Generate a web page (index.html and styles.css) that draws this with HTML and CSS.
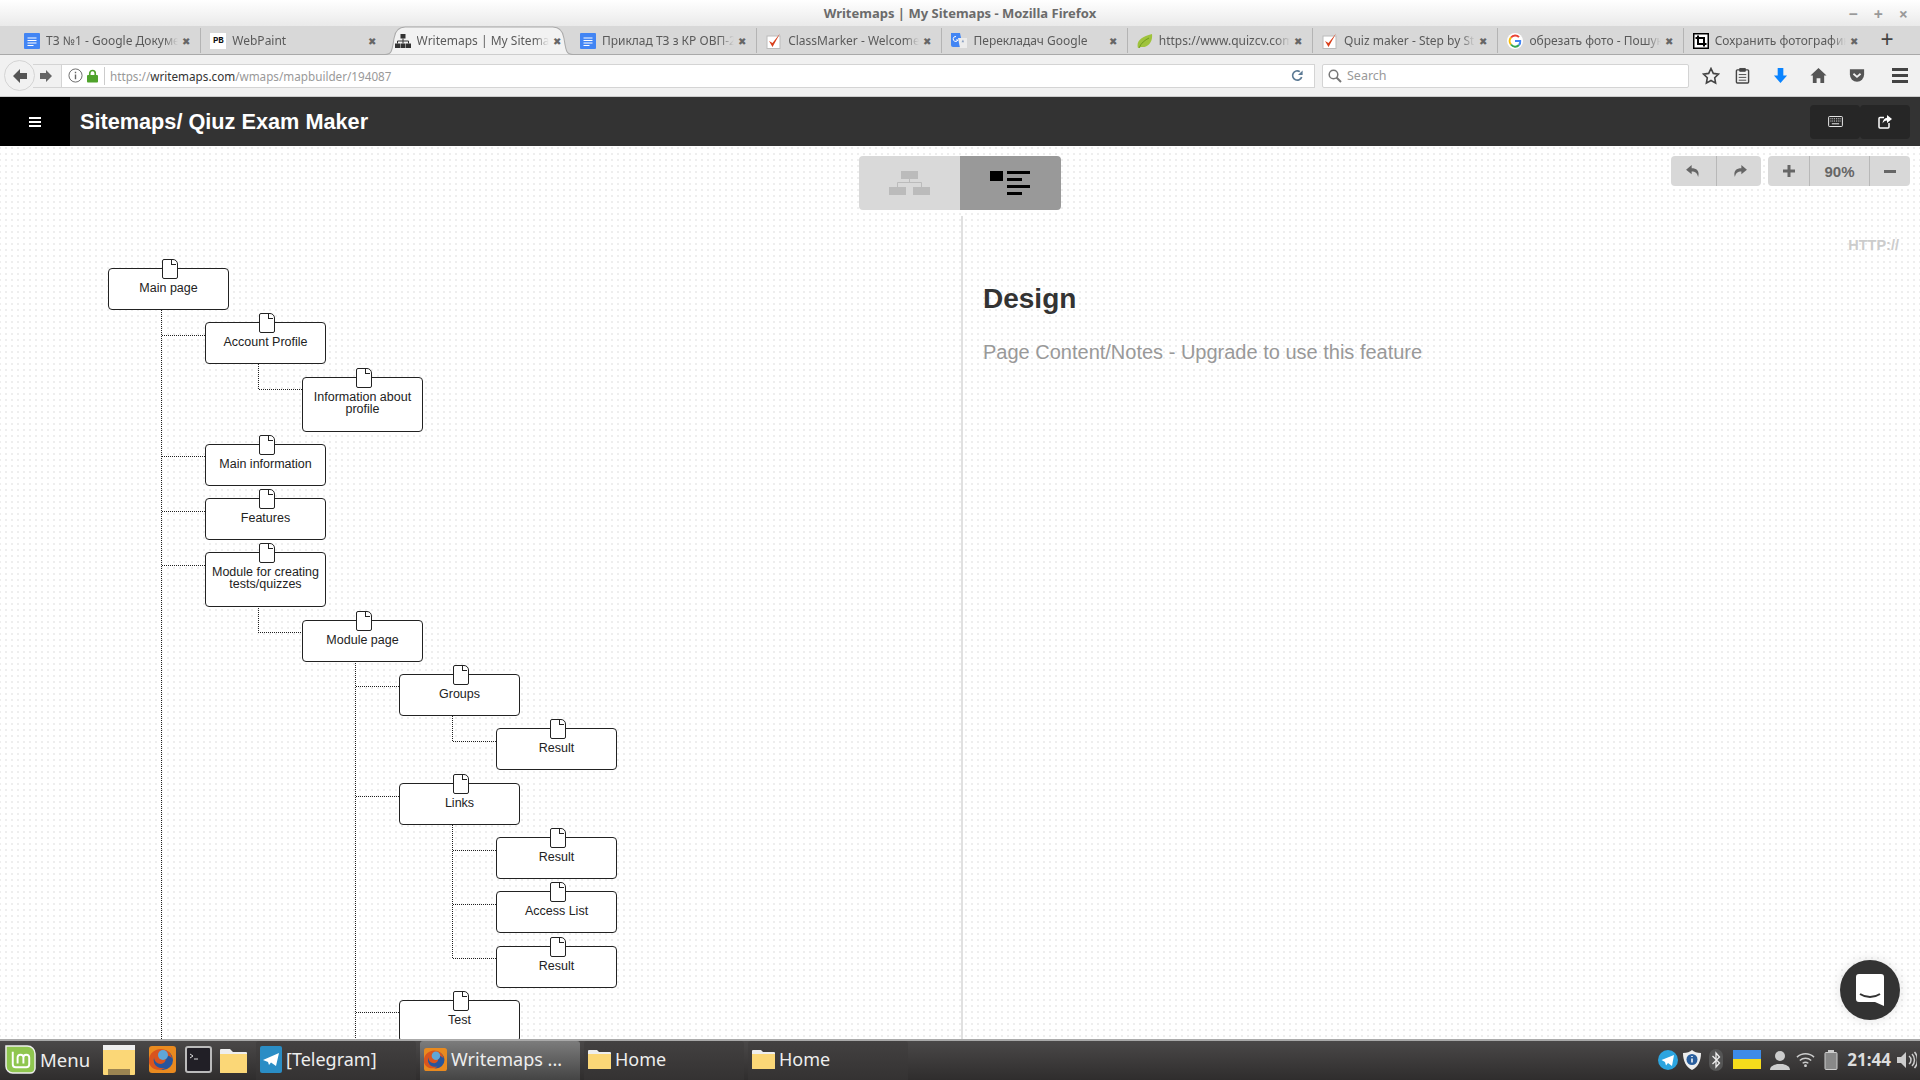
FILE: index.html
```html
<!doctype html>
<html>
<head>
<meta charset="UTF-8">
<title>Writemaps | My Sitemaps</title>
<link rel="stylesheet" href="styles.css">
</head>

<body>
<div class="window-bar">
	<span class="window-title">Writemaps | My Sitemaps - Mozilla Firefox</span>
	<div class="window-controls"><span>&#8722;</span><span>+</span><span>&#215;</span></div>
</div>

<div class="tab-bar">
	<div class="tab">
		<svg class="fav" viewBox="0 0 16 16"><rect width="16" height="16" rx="1" fill="#4285f4"/><path d="M3.5 5h9M3.5 7.5h9M3.5 10h9M3.5 12.5h6" stroke="#fff" stroke-width="1"/></svg>
		<span class="tab-text">ТЗ №1 - Google Документи</span><span class="tab-x">&#10006;</span>
	</div>
	<div class="tab">
		<span class="fav fav-pb">PB</span>
		<span class="tab-text">WebPaint</span><span class="tab-x">&#10006;</span>
	</div>
	<div class="tab tab-active">
		<svg class="tab-shape" viewBox="0 0 186 29" preserveAspectRatio="none"><path d="M0 28.5C7 28.5 7 24 9 12 10 5 13 1 20 1H166C173 1 176 5 177 12 179 24 179 28.5 186 28.5" fill="#f2f2f2" stroke="#a9a9a9"/></svg>
		<svg class="fav" viewBox="0 0 16 16"><path d="M5.5 1h5v4.500h-5zM0 10.500h5V15H0zM5.500 10.500h5V15h-5zM11 10.500h5V15h-5z" fill="#333"/><path d="M8 5.500V10.500M2.500 10.500V8h11v2.500" stroke="#333" fill="none"/></svg>
		<span class="tab-text">Writemaps | My Sitemaps</span><span class="tab-x">&#10006;</span>
	</div>
	<div class="tab">
		<svg class="fav" viewBox="0 0 16 16"><rect width="16" height="16" rx="1" fill="#4285f4"/><path d="M3.5 5h9M3.5 7.5h9M3.5 10h9M3.5 12.5h6" stroke="#fff" stroke-width="1"/></svg>
		<span class="tab-text">Приклад ТЗ з КР ОВП-2</span><span class="tab-x">&#10006;</span>
	</div>
	<div class="tab">
		<svg class="fav" viewBox="0 0 16 16"><rect x="1" y="3" width="13" height="12.500" fill="#fff" stroke="#bbb"/><path d="M3 8l3.500 6L14 0.500 6.500 10z" fill="#d9401c"/></svg>
		<span class="tab-text">ClassMarker - Welcome</span><span class="tab-x">&#10006;</span>
	</div>
	<div class="tab">
		<svg class="fav" viewBox="0 0 16 16"><path d="M0 0h9l3 14H2a2 2 0 0 1-2-2z" fill="#4285f4"/><path d="M7 5h9v10H9z" fill="#ececec"/><path d="M12 6.500l1 2.800h-2.500z" fill="#8a9fc0"/><path d="M5 3.500a2.500 2.500 0 1 0 2 3.500H5" fill="none" stroke="#fff"/></svg>
		<span class="tab-text">Перекладач Google</span><span class="tab-x">&#10006;</span>
	</div>
	<div class="tab">
		<svg class="fav" viewBox="0 0 16 16"><path d="M1 15C-1 8 4 4 15 1 16 9 11 15 4 14z" fill="#9fc33c"/><path d="M2 15C4 10 8 7 12 5" stroke="#6f9a20" fill="none"/></svg>
		<span class="tab-text">https://www.quizcv.com</span><span class="tab-x">&#10006;</span>
	</div>
	<div class="tab">
		<svg class="fav" viewBox="0 0 16 16"><rect x="1" y="3" width="13" height="12.500" fill="#fff" stroke="#bbb"/><path d="M3 8l3.500 6L14 0.500 6.500 10z" fill="#d9401c"/></svg>
		<span class="tab-text">Quiz maker - Step by Step</span><span class="tab-x">&#10006;</span>
	</div>
	<div class="tab">
		<svg class="fav" viewBox="0 0 16 16"><circle cx="8" cy="8" r="8" fill="#fff"/><path d="M12 4.200A5.200 5.200 0 0 0 4 4.500" fill="none" stroke="#ea4335" stroke-width="2"/><path d="M4 4.500A5.200 5.200 0 0 0 4 11.500" fill="none" stroke="#fbbc05" stroke-width="2"/><path d="M4 11.500A5.200 5.200 0 0 0 12 12" fill="none" stroke="#34a853" stroke-width="2"/><path d="M12 12A5.200 5.200 0 0 0 13.200 8H8" fill="none" stroke="#4285f4" stroke-width="2"/></svg>
		<span class="tab-text">обрезать фото - Пошук</span><span class="tab-x">&#10006;</span>
	</div>
	<div class="tab">
		<svg class="fav" viewBox="0 0 16 16"><rect width="16" height="16" fill="#000"/><rect x="1.500" y="1.500" width="13" height="13" fill="#fff"/><path d="M5 2.500V11H13.500M2.500 5H11V13.500" fill="none" stroke="#000" stroke-width="2"/></svg>
		<span class="tab-text">Сохранить фотографию</span><span class="tab-x">&#10006;</span>
	</div>
	<span class="tab-new">+</span>
</div>

<div class="nav-bar">
	<div class="nav-back"><svg viewBox="0 0 18 18" width="18" height="18"><path d="M9 2L2 9l7 7V12h7V6H9z" fill="#555"/></svg></div>
	<div class="nav-forward"><svg viewBox="0 0 14 14" width="14" height="14"><path d="M7 1l6 6-6 6V10H1V4h6z" fill="#666"/></svg></div>
	<div class="url-bar">
		<svg class="url-info" viewBox="0 0 16 16" width="15" height="15"><circle cx="8" cy="8" r="7" fill="none" stroke="#666"/><path d="M8 7v5M8 4v1.500" stroke="#666" stroke-width="1.500"/></svg>
		<svg class="url-lock" viewBox="0 0 12 14" width="11" height="14"><rect y="6" width="12" height="8" rx="1" fill="#4fa32b"/><path d="M3 6V4a3 3 0 0 1 6 0v2" fill="none" stroke="#4fa32b" stroke-width="1.800"/></svg>
		<span class="url-text">https://<b>writemaps.com</b>/wmaps/mapbuilder/194087</span>
		<svg class="url-reload" viewBox="0 0 14 14" width="13" height="13"><path d="M11.500 8.500A5 5 0 1 1 9.500 2.800" fill="none" stroke="#5c7a94" stroke-width="1.800"/><path d="M7.500 6.500L12.500 6.500 12.500 1.500z" fill="#5c7a94"/></svg>
	</div>
	<div class="search-bar">
		<svg viewBox="0 0 14 14" width="14" height="14"><circle cx="5.500" cy="5.500" r="4.300" fill="none" stroke="#777" stroke-width="1.500"/><path d="M8.500 8.500L13 13" stroke="#777" stroke-width="2"/></svg>
		<span>Search</span>
	</div>
	<div class="nav-icons">
		<svg class="nav-star" viewBox="0 0 18 18" width="18" height="18"><path d="M9 1.500l2.300 4.900 5.200.7-3.800 3.700.9 5.300L9 13.500l-4.600 2.600.9-5.300L1.500 7.100l5.200-.7z" fill="none" stroke="#444" stroke-width="1.600"/></svg>
		<svg class="nav-clip" viewBox="0 0 16 18" width="15" height="17"><rect x="1.500" y="3" width="13" height="14" rx="1" fill="none" stroke="#444" stroke-width="1.500"/><path d="M5 1.500h6v3H5zM4 8h8M4 11h8M4 14h8" stroke="#444" fill="#444"/></svg>
		<svg class="nav-down" viewBox="0 0 16 18" width="15" height="17"><path d="M5 1h6v8h4l-7 8-7-8h4z" fill="#0a84ff"/></svg>
		<svg class="nav-home" viewBox="0 0 18 18" width="17" height="17"><path d="M9 1L0.500 9H3v8h4v-5h4v5h4V9h2.500z" fill="#555"/></svg>
		<svg class="nav-pocket" viewBox="0 0 18 16" width="16" height="15"><path d="M1 1h16v6a8 8 0 0 1-16 0z" fill="#555"/><path d="M5 6l4 3.500L13 6" stroke="#f1f1f1" stroke-width="2" fill="none"/></svg>
		<div class="nav-menu"><i></i><i></i><i></i></div>
	</div>
</div>

<div class="app-header">
	<div class="app-burger"><i></i><i></i><i></i></div>
	<h1 class="app-title">Sitemaps/ Qiuz Exam Maker</h1>
	<div class="app-actions">
		<span class="app-action"><svg viewBox="0 0 16 12" width="15" height="11"><rect x=".5" y=".5" width="15" height="11" rx="1" fill="none" stroke="#fff"/><path d="M2.500 3h11M2.500 5.500h11" stroke="#fff" stroke-dasharray="1 1"/><path d="M4 8.500h8" stroke="#fff"/></svg></span>
		<span class="app-action"><svg viewBox="0 0 14 14" width="14" height="14"><path d="M6 2.500H2a1 1 0 0 0-1 1V12a1 1 0 0 0 1 1h8a1 1 0 0 0 1-1V8" fill="none" stroke="#fff" stroke-width="1.500"/><path d="M9 0l5 4-5 4V5.500C7 5.500 5.500 6.500 4.500 8.500 4.700 5 6.500 3 9 2.700z" fill="#fff"/></svg></span>
	</div>
</div>

<div class="canvas">
	<div class="tree">
		<svg class="links" width="640" height="894">
			<path d="M161.500 164V894M162 189.500H205M162 310.500H205M162 365.500H205M162 419.500H205"/>
			<path d="M258.500 218V243.500H302M258.500 460V486.500H302"/>
			<path d="M355.500 515V894M356 540.500H399M356 650.500H399M356 866.500H399"/>
			<path d="M452.500 570V595.500H496M452.500 677V812.500H496M453 704.500H496M453 758.500H496"/>
		</svg>

		<div class="node lvl0">Main page</div>
		<div class="node lvl1">Account Profile</div>
		<div class="node lvl2 node-tall">Information about<br>profile</div>
		<div class="node lvl1">Main information</div>
		<div class="node lvl1">Features</div>
		<div class="node lvl1 node-tall">Module for creating<br>tests/quizzes</div>
		<div class="node lvl2">Module page</div>
		<div class="node lvl3">Groups</div>
		<div class="node lvl4">Result</div>
		<div class="node lvl3">Links</div>
		<div class="node lvl4">Result</div>
		<div class="node lvl4">Access List</div>
		<div class="node lvl4">Result</div>
		<div class="node lvl3">Test</div>
	</div>

	<div class="detail">
		<div class="detail-http">HTTP://</div>
		<h2 class="detail-title">Design</h2>
		<p class="detail-note">Page Content/Notes - Upgrade to use this feature</p>
	</div>

	<div class="view-toggle">
		<span class="view-tree"><svg viewBox="0 0 41 24" width="41" height="24"><path d="M12 0h17v8H12zM0 16h17v8H0zM24 16h17v8H24z" fill="#bbb"/><path d="M20.500 8v3M8.500 16v-4.500h24V16" stroke="#bbb" fill="none"/></svg></span>
		<span class="view-list"><svg viewBox="0 0 40 24" width="40" height="24"><path d="M0 0h13v10H0zM17 0h23v3H17zM17 7h15v3H17zM17 14h23v3H17zM17 21h15v3H17z" fill="#000"/></svg></span>
	</div>

	<div class="tools">
		<div class="tool-group">
			<span class="tool tool-undo"><svg viewBox="0 0 16 14" width="15" height="13"><path d="M6 0L0 5l6 5V7c4 0 6 1.500 7 6 2-7-2-9.500-7-9.500z" fill="#666"/></svg></span>
			<span class="tool tool-undo"><svg viewBox="0 0 16 14" width="15" height="13"><path d="M10 0l6 5-6 5V7C6 7 4 8.500 3 13 1 6 5 3.500 10 3.500z" fill="#666"/></svg></span>
		</div>
		<div class="tool-group">
			<span class="tool tool-plus"><svg viewBox="0 0 12 12" width="12" height="12"><path d="M4.500 0h3v4.500H12v3H7.500V12h-3V7.500H0v-3h4.500z" fill="#666"/></svg></span>
			<span class="tool tool-zoom">90%</span>
			<span class="tool tool-minus"><svg viewBox="0 0 12 3" width="12" height="3"><path d="M0 0h12v3H0z" fill="#666"/></svg></span>
		</div>
	</div>

	<div class="chat-btn"><svg viewBox="0 0 28 32" width="28" height="32"><path d="M3 0h22a3 3 0 0 1 3 3v29l-9-4H3a3 3 0 0 1-3-3V3a3 3 0 0 1 3-3z" fill="#fff"/><path d="M4 20c6 4 14 4 20 0" fill="none" stroke="#333" stroke-width="2"/></svg></div>
</div>

<div class="taskbar">
	<div class="task-menu">
		<svg viewBox="0 0 32 32" width="31" height="31"><path d="M1 2h22a8 8 0 0 1 8 8v15a5 5 0 0 1-5 5H8a7 7 0 0 1-7-7z" fill="#8fc64f" stroke="#eee" stroke-width="1.500"/><path d="M8 8v13a3 3 0 0 0 3 3h11a3 3 0 0 0 3-3v-7a3 3 0 0 0-6 0v6M13 20v-6a3 3 0 0 1 6 0" fill="none" stroke="#fff" stroke-width="2"/></svg>
		<span>Menu</span>
	</div>
	<div class="task-launchers">
		<svg class="launch-files" viewBox="0 0 32 32" width="32" height="32"><rect y="1" width="32" height="30" rx="1" fill="#fbd777"/><rect y="1" width="32" height="5" fill="#eee"/><rect x="5" y="25" width="22" height="6" fill="#9c8552"/></svg>
		<svg class="launch-ff" viewBox="0 0 27 27" width="27" height="27"><rect width="27" height="27" rx="3" fill="#e98a1f"/><circle cx="14" cy="14" r="10" fill="#27559c"/><path d="M7 4c7-3 15 1 16 8-3-3-6-3-8-2 3 2 2 7-3 8-4 0-7-3-7-7-2 8 4 12 11 11-7 4-14 1-16-5C-1 11 2 6 7 4z" fill="#d9541e"/><circle cx="14" cy="9" r="5" fill="#5fa6d8"/></svg>
		<svg class="launch-term" viewBox="0 0 27 27" width="27" height="27"><rect x="1" y="1" width="25" height="25" rx="2" fill="#211f26" stroke="#bbb" stroke-width="2"/><path d="M5 8l3 2-3 2" fill="none" stroke="#ddd"/><path d="M9 13h4" stroke="#ddd"/></svg>
		<svg class="launch-folder" viewBox="0 0 27 27" width="27" height="27"><path d="M0 4a1 1 0 0 1 1-1h9l3 3h13a1 1 0 0 1 1 1v19a1 1 0 0 1-1 1H1a1 1 0 0 1-1-1z" fill="#eee"/><path d="M0 8h27v18a1 1 0 0 1-1 1H1a1 1 0 0 1-1-1z" fill="#fbd777"/></svg>
	</div>
	<div class="task-windows">
		<div class="task-win">
			<svg viewBox="0 0 22 27" width="22" height="27"><rect width="22" height="27" rx="2" fill="#2a8dc5"/><path d="M3 14L19 7 16 20 11 16.500 9 19 8 16z" fill="#fff"/></svg>
			<span>[Telegram]</span>
		</div>
		<div class="task-win task-win-active">
			<svg viewBox="0 0 27 27" width="23" height="27"><rect width="27" height="27" rx="3" fill="#e98a1f"/><circle cx="14" cy="14" r="10" fill="#27559c"/><path d="M7 4c7-3 15 1 16 8-3-3-6-3-8-2 3 2 2 7-3 8-4 0-7-3-7-7-2 8 4 12 11 11-7 4-14 1-16-5C-1 11 2 6 7 4z" fill="#d9541e"/><circle cx="14" cy="9" r="5" fill="#5fa6d8"/></svg>
			<span>Writemaps ...</span>
		</div>
		<div class="task-win">
			<svg viewBox="0 0 23 20" width="23" height="20"><path d="M0 2a1 1 0 0 1 1-1h8l2 2h11a1 1 0 0 1 1 1v15a1 1 0 0 1-1 1H1a1 1 0 0 1-1-1z" fill="#eee"/><path d="M0 5h23v14a1 1 0 0 1-1 1H1a1 1 0 0 1-1-1z" fill="#fbd777"/></svg>
			<span>Home</span>
		</div>
		<div class="task-win">
			<svg viewBox="0 0 23 20" width="23" height="20"><path d="M0 2a1 1 0 0 1 1-1h8l2 2h11a1 1 0 0 1 1 1v15a1 1 0 0 1-1 1H1a1 1 0 0 1-1-1z" fill="#eee"/><path d="M0 5h23v14a1 1 0 0 1-1 1H1a1 1 0 0 1-1-1z" fill="#fbd777"/></svg>
			<span>Home</span>
		</div>
	</div>
	<div class="task-tray">
		<svg viewBox="0 0 20 20" width="20" height="20"><circle cx="10" cy="10" r="10" fill="#2ca5e0"/><path d="M3.500 10L16 5l-2 11-4-3-2 2.500-1-3.500z" fill="#fff"/></svg>
		<svg class="tray-shield" viewBox="0 0 18 20" width="18" height="20"><path d="M9 0c2 2 5 3 9 3 0 8-3 14-9 17C3 17 0 11 0 3c4 0 7-1 9-3z" fill="#eee"/><circle cx="9" cy="9.500" r="5.500" fill="#2a5f9e"/><path d="M9 6v1M9 8.500v4" stroke="#fff" stroke-width="1.500"/></svg>
		<svg class="tray-bt" viewBox="0 0 14 22" width="14" height="22"><rect width="14" height="22" rx="7" fill="#555"/><path d="M3.500 7L10.500 14 7 18V4l3.500 4L3.500 15" fill="none" stroke="#eee" stroke-width="1.300"/></svg>
		<span class="tray-flag"></span>
		<svg class="tray-user" viewBox="0 0 20 20" width="20" height="20"><circle cx="10" cy="6" r="5" fill="#ccc"/><path d="M0 20c0-4 4-5 7-6h6c3 1 7 2 7 6z" fill="#ccc"/></svg>
		<svg viewBox="0 0 20 15" width="19" height="15"><path d="M1 5a13 13 0 0 1 18 0M4 8.500a9 9 0 0 1 12 0M7 11.500a5 5 0 0 1 6 0" fill="none" stroke="#ccc" stroke-width="1.500"/><circle cx="10" cy="14" r="1.500" fill="#ccc"/></svg>
		<svg class="tray-batt" viewBox="0 0 14 20" width="14" height="20"><path d="M4 0h6v2H4z" fill="#ccc"/><rect x="1" y="2.500" width="12" height="17" rx="1" fill="#888" stroke="#ccc"/></svg>
		<span class="tray-time">21:44</span>
		<svg viewBox="0 0 20 18" width="20" height="18"><path d="M0 6h4l5-5v16l-5-5H0z" fill="#ccc"/><path d="M12 5a5 5 0 0 1 0 8M15 3a8.500 8.500 0 0 1 0 12M17.500 1a12 12 0 0 1 0 16" fill="none" stroke="#ccc" stroke-width="1.500"/></svg>
	</div>
</div>
</body>
</html>
```

FILE: styles.css
```css
* {
	box-sizing: border-box;
}

html, body {
	height: 100%;
}

body {
	margin: 0;
	display: flex;
	flex-direction: column;
	overflow: hidden;
	background: #fff;
	font-family: "Noto Sans", sans-serif;
}

/* window title */
.window-bar {
	height: 26px;
	flex: none;
	display: flex;
	align-items: center;
	justify-content: center;
	position: relative;
	background: linear-gradient(#fff, #eaeaea);
}

.window-title {
	font-size: 13px;
	font-weight: 700;
	color: #6b6b6b;
}

.window-controls {
	position: absolute;
	right: 12px;
	top: 4px;
	display: flex;
	gap: 16px;
	font-size: 16px;
	line-height: 20px;
	font-weight: 700;
	color: #999;
}

/* browser tabs */
.tab-bar {
	height: 29px;
	flex: none;
	display: flex;
	padding-left: 15px;
	background: #d8d8d8;
	border-bottom: 1px solid #a9a9a9;
}

.tab {
	width: 185.3px;
	height: 25px;
	margin-top: 2px;
	padding: 0 7px 0 9px;
	display: flex;
	align-items: center;
	border-left: 1px solid #b4b4b4;
	position: relative;
}

.tab:first-child {
	border-left: 0;
}

.tab-active {
	border-left: 0;
}

.tab-active + .tab {
	border-left: 0;
}

.tab-shape {
	position: absolute;
	left: -1px;
	top: -2px;
	width: 188px;
	height: 29px;
}

.fav {
	width: 16px;
	height: 16px;
	flex: none;
	position: relative;
}

.fav-pb {
	background: #fff;
	color: #111;
	font: 700 9px/16px "Liberation Mono", monospace;
	text-align: center;
}

.tab-text {
	flex: 1;
	min-width: 0;
	margin-left: 6px;
	font-size: 12px;
	color: #5a5a5a;
	white-space: nowrap;
	overflow: hidden;
	position: relative;
	-webkit-mask-image: linear-gradient(to left, transparent, #000 14px);
	mask-image: linear-gradient(to left, transparent, #000 14px);
}

.tab-x {
	width: 11px;
	margin-left: 4px;
	flex: none;
	position: relative;
	font-size: 10px;
	color: #666;
}

.tab-new {
	margin-left: 9px;
	font-size: 23px;
	line-height: 26px;
	color: #444;
	width: 20px;
	text-align: center;
}

/* address bar */
.nav-bar {
	height: 42px;
	flex: none;
	display: flex;
	align-items: center;
	padding-left: 4px;
	background: #f1f1f1;
	border-bottom: 1px solid #ccc;
}

.nav-back {
	width: 31px;
	height: 31px;
	flex: none;
	display: flex;
	align-items: center;
	justify-content: center;
	border: 1px solid #d4d4d4;
	border-radius: 50%;
	background: #f1f1f1;
	position: relative;
	z-index: 1;
}

.nav-forward {
	width: 28px;
	height: 24px;
	flex: none;
	margin-left: -2px;
	padding-left: 6px;
	display: flex;
	align-items: center;
	border: 1px solid #d4d4d4;
	border-width: 1px 0;
	background: #f1f1f1;
}

.url-bar {
	width: 1254px;
	height: 24px;
	flex: none;
	display: flex;
	align-items: center;
	padding-left: 6px;
	background: #fff;
	border: 1px solid #d4d4d4;
}

.url-lock {
	margin-left: 4px;
}

.url-text {
	flex: 1;
	margin-left: 6px;
	padding-left: 5px;
	border-left: 1px solid #ccc;
	font-size: 11.7px;
	line-height: 18px;
	color: #999;
}

.url-text b {
	font-weight: 400;
	color: #333;
}

.url-reload {
	margin-right: 10px;
}

.search-bar {
	width: 367px;
	height: 24px;
	flex: none;
	margin-left: 7px;
	padding-left: 5px;
	display: flex;
	align-items: center;
	gap: 5px;
	background: #fff;
	border: 1px solid #d4d4d4;
	border-radius: 2px;
	font-size: 12.5px;
	color: #999;
}

.nav-icons {
	flex: 1;
	display: flex;
	align-items: center;
	padding-left: 13px;
}

.nav-clip {
	margin-left: 15px;
}

.nav-down {
	margin-left: 23px;
}

.nav-home {
	margin-left: 22px;
}

.nav-pocket {
	margin-left: 22px;
}

.nav-menu {
	margin-left: 27px;
	width: 16px;
	display: flex;
	flex-direction: column;
	gap: 3px;
}

.nav-menu i {
	height: 3px;
	background: #444;
}

/* app header */
.app-header {
	height: 49px;
	flex: none;
	display: flex;
	align-items: center;
	background: #333;
}

.app-burger {
	width: 70px;
	height: 100%;
	display: flex;
	flex-direction: column;
	align-items: center;
	justify-content: center;
	gap: 2px;
	background: #000;
}

.app-burger i {
	width: 12px;
	height: 2px;
	background: #fff;
}

.app-title {
	margin: 0 0 0 10px;
	font: 700 21.7px "Liberation Sans", sans-serif;
	color: #fff;
}

.app-actions {
	margin-left: auto;
	margin-right: 10px;
	display: flex;
}

.app-action {
	width: 50px;
	height: 34px;
	display: flex;
	align-items: center;
	justify-content: center;
	background: #262626;
	border-radius: 4px;
}

/* map canvas */
.canvas {
	flex: 1;
	min-height: 0;
	display: flex;
	position: relative;
	overflow: hidden;
	background-color: #fff;
	background-image: conic-gradient(from 270deg at 2px 2px, #eee 25%, transparent 0);
	background-size: 6px 6px;
	background-position: 5px 1px;
}

.tree {
	width: 961px;
	flex: none;
	padding: 122px 0 0 108px;
	display: flex;
	flex-direction: column;
	gap: 12.3px;
	position: relative;
}

.links {
	position: absolute;
	left: 0;
	top: 0;
}

.links path {
	fill: none;
	stroke: #222;
	stroke-dasharray: 1 1;
	shape-rendering: crispEdges;
}

.node {
	width: 121px;
	height: 42px;
	flex: none;
	padding: 13px 2px 0;
	position: relative;
	background: #fff;
	border: 1px solid #222;
	border-radius: 4px;
	font: 12.5px/12px "Liberation Sans", sans-serif;
	color: #222;
	text-align: center;
}

.node-tall {
	height: 55px;
}

.node::before {
	content: "";
	position: absolute;
	left: 53px;
	top: -10px;
	width: 14px;
	height: 18px;
	background: #fff;
	border: 1.3px solid #222;
	border-radius: 2px 5px 2px 2px;
}

.node::after {
	content: "";
	position: absolute;
	left: 62px;
	top: -9px;
	width: 4px;
	height: 4px;
	border: solid #222;
	border-width: 0 0 1px 1px;
}

.lvl1 { margin-left: 97px; }
.lvl2 { margin-left: 194px; }
.lvl3 { margin-left: 291px; }
.lvl4 { margin-left: 388px; }

.detail {
	flex: 1;
	margin-top: 70px;
	padding: 0 21px 0 20px;
	border-left: 2px solid #e0e0e0;
	font-family: "Liberation Sans", sans-serif;
}

.detail-http {
	padding-top: 21px;
	font-size: 14.5px;
	line-height: 17px;
	font-weight: 700;
	color: #ccc;
	text-align: right;
}

.detail-title {
	margin: 28px 0 0;
	font-size: 28px;
	line-height: 34px;
	color: #333;
}

.detail-note {
	margin: 23px 0 0;
	font-size: 20px;
	line-height: 26px;
	color: #999;
}

.view-toggle {
	position: absolute;
	left: 859px;
	top: 10px;
	display: flex;
	height: 54px;
	border-radius: 4px;
	overflow: hidden;
}

.view-tree,
.view-list {
	width: 101px;
	display: flex;
	align-items: center;
	justify-content: center;
	background: #d9d9d9;
}

.view-list {
	padding-right: 2px;
	background: #999;
}

.tools {
	position: absolute;
	right: 10px;
	top: 10px;
	display: flex;
	gap: 7px;
}

.tool-group {
	height: 30px;
	display: flex;
	background: #d8d8d8;
	border-radius: 4px;
}

.tool {
	display: flex;
	align-items: center;
	justify-content: center;
	border-left: 1px solid #b8b8b8;
	font: 700 15px "Liberation Sans", sans-serif;
	color: #666;
}

.tool:first-child {
	border-left: 0;
}

.tool-undo { width: 45px; }
.tool-plus { width: 41px; }
.tool-zoom { width: 60px; }
.tool-minus { width: 41px; }

.chat-btn {
	position: absolute;
	right: 20px;
	bottom: 19px;
	width: 60px;
	height: 60px;
	display: flex;
	align-items: center;
	justify-content: center;
	background: #333;
	border-radius: 50%;
	box-shadow: 0 0 12px rgba(0, 0, 0, 0.12);
}

/* desktop panel */
.taskbar {
	height: 41px;
	padding-bottom: 2px;
	flex: none;
	display: flex;
	align-items: center;
	color: #eee;
	font-size: 18px;
	background: linear-gradient(#4a4848, #2f2d2d);
	border-top: 2px solid #aaa;
}

.task-menu {
	width: 103px;
	padding-left: 5px;
	display: flex;
	align-items: center;
	gap: 4px;
	flex: none;
	font-size: 18.5px;
}

.task-launchers {
	width: 153px;
	flex: none;
	display: flex;
	align-items: center;
}

.launch-ff { margin-left: 14px; }
.launch-term { margin-left: 9px; }
.launch-folder { margin-left: 8px; }

.task-windows {
	display: flex;
	gap: 4px;
	height: calc(100% + 2px);
	margin-top: 1px;
}

.task-win {
	width: 160px;
	display: flex;
	align-items: center;
	gap: 4px;
	padding: 0 0 2px 4px;
	border-radius: 3px 3px 0 0;
	background: linear-gradient(#434141, #343232);
}

.task-win-active {
	background: linear-gradient(#7c7c7c, #444);
}

.task-tray {
	margin-left: auto;
	margin-right: 3px;
	display: flex;
	align-items: center;
	gap: 6px;
}

.tray-shield {
	margin-left: -1px;
}

.tray-bt {
	margin-left: 2px;
}

.tray-flag {
	width: 28px;
	height: 19px;
	margin-left: 4px;
	background: linear-gradient(#3d8be8 50%, #f5dc1c 50%);
}

.tray-user {
	margin-left: 3px;
}

.tray-batt {
	margin-left: 3px;
}

.tray-time {
	margin-left: 3px;
	font-weight: 700;
	font-size: 17px;
	color: #ddd;
}
```
